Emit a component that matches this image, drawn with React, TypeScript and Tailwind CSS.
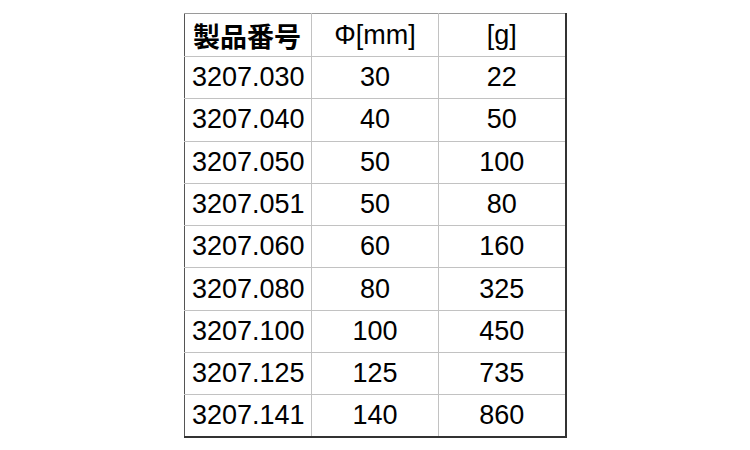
const ROWS: [string, string, string][] = [
  ['3207.030', '30', '22'],
  ['3207.040', '40', '50'],
  ['3207.050', '50', '100'],
  ['3207.051', '50', '80'],
  ['3207.060', '60', '160'],
  ['3207.080', '80', '325'],
  ['3207.100', '100', '450'],
  ['3207.125', '125', '735'],
  ['3207.141', '140', '860'],
];

export default function App() {
  return (
    <div
      className="w-[750px] h-[450px] bg-white pl-[184px] pt-[13px] text-black"
      style={{ fontFamily: '"Liberation Sans", Arial, "Noto Sans CJK JP", sans-serif' }}
    >
      <table className="border-collapse table-fixed text-[27px] leading-none border-t border-t-[#9a9a9a] border-l border-l-[#555] border-r-2 border-r-[#333] border-b-2 border-b-[#333]">
        <colgroup>
          <col className="w-[127px]" />
          <col className="w-[127px]" />
          <col className="w-[127px]" />
        </colgroup>
        <thead>
          <tr className="h-[43px]">
            <th
              className="text-left pl-[8px] font-bold border-r border-b border-[#c2c2c2]"
              style={{ fontFamily: '"Noto Sans CJK JP", sans-serif' }}
            >
              製品番号
            </th>
            <th className="font-normal text-center border-r border-b border-[#c2c2c2]">Φ[mm]</th>
            <th className="font-normal text-center border-b border-[#c2c2c2]">[g]</th>
          </tr>
        </thead>
        <tbody>
          {ROWS.map(([code, dia, weight], i) => (
            <tr key={code} className="h-[42.3px]">
              <td className={`text-left pl-[7px] border-r border-[#c2c2c2] ${i < ROWS.length - 1 ? 'border-b' : ''}`}>{code}</td>
              <td className={`text-center border-r border-[#c2c2c2] ${i < ROWS.length - 1 ? 'border-b' : ''}`}>{dia}</td>
              <td className={`text-center border-[#c2c2c2] ${i < ROWS.length - 1 ? 'border-b' : ''}`}>{weight}</td>
            </tr>
          ))}
        </tbody>
      </table>
    </div>
  );
}
